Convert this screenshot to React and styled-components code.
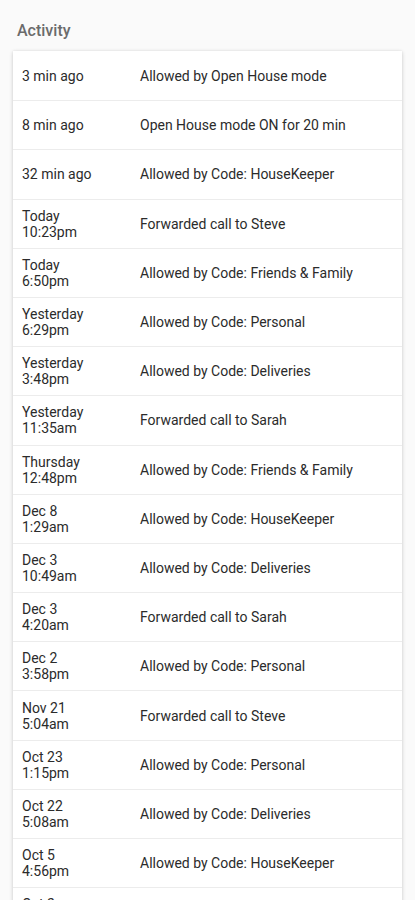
import React from "react";
import styled, { createGlobalStyle } from "styled-components";

const Global = createGlobalStyle`
  html, body { margin: 0; padding: 0; background: #fafafa; }
  body { font-family: Roboto, "Noto Sans", sans-serif; -webkit-font-smoothing: antialiased; }
`;

const Page = styled.div`
  width: 415px;
  height: 900px;
  overflow: hidden;
  background: #fafafa;
  padding: 21px 13px 0 13px;
  box-sizing: border-box;
`;

const Title = styled.h2`
  margin: 0 0 11px 4px;
  font-size: 16px;
  line-height: 19px;
  font-weight: 500;
  color: #6b6b6b;
`;

const Card = styled.div`
  background: #fff;
  box-shadow: 0 1px 4px rgba(0, 0, 0, 0.18), 0 0 2px rgba(0, 0, 0, 0.06);
`;

const Row = styled.div`
  display: grid;
  grid-template-columns: 118px 1fr;
  align-items: center;
  height: 49.2px;
  box-sizing: border-box;
  padding: 0 9px;
  border-top: ${(p) => (p.$first ? "none" : "1px solid #ececec")};
`;

const When = styled.div`
  font-size: 14px;
  line-height: 16px;
  color: #2b2b2b;
`;

const What = styled.div`
  font-size: 14px;
  line-height: 16px;
  color: #2b2b2b;
`;

const items = [
  ["3 min ago", "Allowed by Open House mode"],
  ["8 min ago", "Open House mode ON for 20 min"],
  ["32 min ago", "Allowed by Code: HouseKeeper"],
  ["Today\n10:23pm", "Forwarded call to Steve"],
  ["Today\n6:50pm", "Allowed by Code: Friends & Family"],
  ["Yesterday\n6:29pm", "Allowed by Code: Personal"],
  ["Yesterday\n3:48pm", "Allowed by Code: Deliveries"],
  ["Yesterday\n11:35am", "Forwarded call to Sarah"],
  ["Thursday\n12:48pm", "Allowed by Code: Friends & Family"],
  ["Dec 8\n1:29am", "Allowed by Code: HouseKeeper"],
  ["Dec 3\n10:49am", "Allowed by Code: Deliveries"],
  ["Dec 3\n4:20am", "Forwarded call to Sarah"],
  ["Dec 2\n3:58pm", "Allowed by Code: Personal"],
  ["Nov 21\n5:04am", "Forwarded call to Steve"],
  ["Oct 23\n1:15pm", "Allowed by Code: Personal"],
  ["Oct 22\n5:08am", "Allowed by Code: Deliveries"],
  ["Oct 5\n4:56pm", "Allowed by Code: HouseKeeper"],
  ["Oct 2\n9:12am", "Allowed by Code: Personal"],
];

export default function App() {
  return (
    <>
      <Global />
      <Page>
        <Title>Activity</Title>
        <Card>
          {items.map(([when, what], i) => (
            <Row key={i} $first={i === 0}>
              <When>
                {when.split("\n").map((l, j) => (
                  <div key={j}>{l}</div>
                ))}
              </When>
              <What>{what}</What>
            </Row>
          ))}
        </Card>
      </Page>
    </>
  );
}
